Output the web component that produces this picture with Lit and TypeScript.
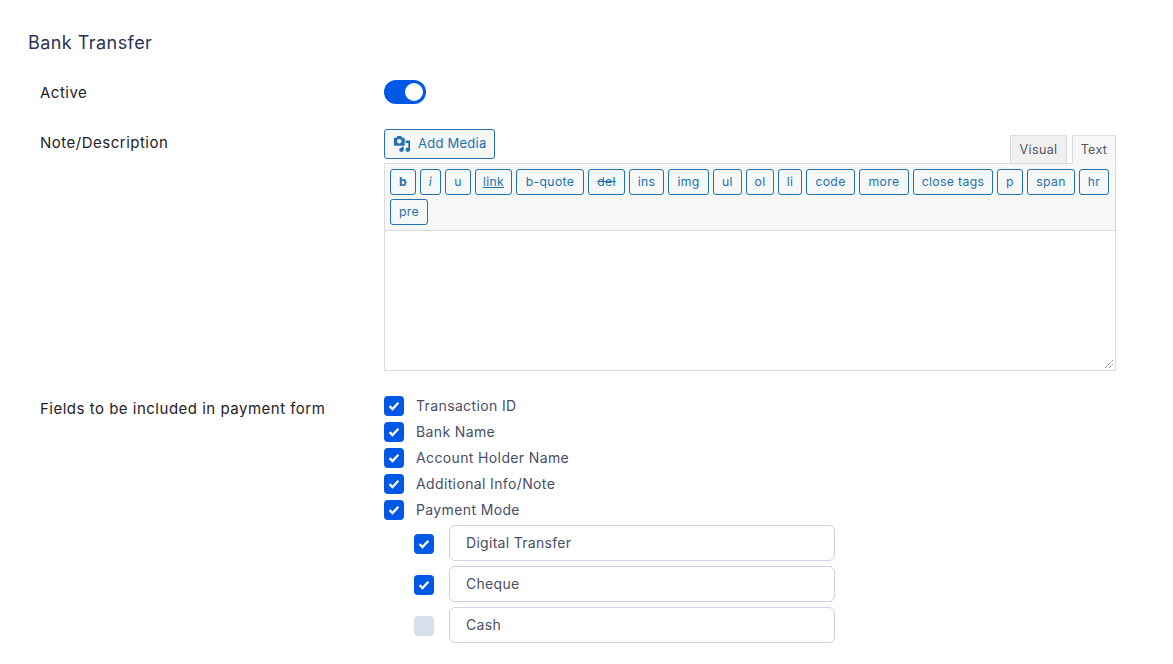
import { LitElement, html, css, svg } from "lit";
import { customElement } from "lit/decorators.js";

const QT: [string, number, string?][] = [
  ["b", 26, "b"], ["i", 21, "i"], ["u", 26], ["link", 37, "l"], ["b-quote", 68], ["del", 37, "d"],
  ["ins", 35], ["img", 41], ["ul", 29], ["ol", 28], ["li", 24], ["code", 49], ["more", 50],
  ["close tags", 80], ["p", 26], ["span", 48], ["hr", 30], ["pre", 38],
];
const FIELDS = ["Transaction ID", "Bank Name", "Account Holder Name", "Additional Info/Note", "Payment Mode"];
const MODES: [string, boolean][] = [["Digital Transfer", true], ["Cheque", true], ["Cash", false]];

const check = svg`<svg width="12" height="10" viewBox="0 0 12 10"><path d="M1.600 5.200 4.500 8 10.400 1.800" fill="none" stroke="#fff" stroke-width="2.300"/></svg>`;

@customElement("app-root")
export class AppRoot extends LitElement {
  static styles = css`
    :host { display: block; width: 1173px; height: 664px; overflow: hidden; background: #fff;
      font-family: Inter, "Noto Sans", sans-serif; box-sizing: border-box; padding: 33px 0 0 28px; }
    * { box-sizing: border-box; }
    h2 { margin: 0; font-size: 18px; line-height: 20px; font-weight: 400; color: #2a3256; letter-spacing: 0.45px; }
    .row { display: grid; grid-template-columns: 344px 732px; padding-left: 12px; }
    .label { font-size: 15px; line-height: 20px; color: #1d2327; letter-spacing: 0.5px; white-space: nowrap; }
    .active { margin-top: 27px; height: 24px; align-items: center; }
    .active .label { padding-top: 1px; }
    .toggle { width: 42px; height: 24px; border-radius: 12px; background: #0058e6; display: flex; align-items: center; justify-content: flex-end; padding-right: 3px; }
    .knob { width: 18px; height: 18px; border-radius: 50%; background: #fff; }
    .note { margin-top: 25px; }
    .note .label { padding-top: 4px; }
    .head { height: 34px; display: flex; justify-content: space-between; align-items: flex-start; }
    .media { height: 30px; width: 111px; display: flex; align-items: center; gap: 7px; padding-left: 8px; border: 1px solid #2271b1; border-radius: 3px; background: #f6f7f7; color: #2271b1; font-size: 13px; letter-spacing: 0.25px; }
    .media span { margin-top: -2px; }
    .tabs { display: flex; gap: 5px; margin-top: 6px; }
    .tab { height: 29px; display: flex; align-items: center; justify-content: center; border: 1px solid #dcdcde; font-size: 12.500px; color: #50575e; background: #f0f0f1; width: 57px; letter-spacing: 0.35px; }
    .tab.on { width: 44px; background: #f6f7f7; border-bottom-color: #f6f7f7; position: relative; }
    .toolbar { display: flex; flex-wrap: wrap; gap: 4px; height: 67px; padding: 5px 5px 0; align-content: flex-start; background: #f6f7f7; border: 1px solid #dcdcde; border-bottom: 0; }
    .qt { height: 26px; display: flex; align-items: center; justify-content: center; border: 1px solid #2271b1; border-radius: 3px; color: #2271b1; font-size: 12.200px; letter-spacing: 0.35px; background: #f6f7f7; white-space: nowrap; padding-bottom: 2px; }
    .qt.b { font-weight: 700; }
    .qt.i { font-style: italic; }
    .qt.l { text-decoration: underline; }
    .qt.d { text-decoration: line-through; }
    .area { height: 141px; border: 1px solid #dcdcde; background: #fff; position: relative; }
    .grip { position: absolute; right: 1px; bottom: 1px; }
    .fields { margin-top: 25px; }
    .fields .label { padding-top: 3px; }
    .list { display: flex; flex-direction: column; gap: 6px; }
    .item { display: flex; align-items: center; gap: 12px; height: 20px; font-size: 14px; line-height: 18px; letter-spacing: 0.37px; color: #484d68; }
    .item-text { display: block; margin-top: -1px; }
    .box { width: 20px; height: 20px; border-radius: 4px; background: #0058e6; display: flex; align-items: center; justify-content: center; flex: none; }
    .box.off { background: #d8dfeb; }
    .modes { display: flex; flex-direction: column; gap: 5px; padding: 0 0 0 30px; margin-top: -1px; }
    .mode { display: flex; align-items: center; gap: 15px; }
    .mode .box { margin-top: 2px; }
    .input { width: 386px; height: 36px; border: 1px solid #cdd3e2; border-radius: 6px; padding: 0 0 2px 16px; display: flex; align-items: center; font-size: 14px; letter-spacing: 0.3px; color: #484d68; background: #fff; }
  `;

  render() {
    return html`
      <h2>Bank Transfer</h2>
      <div class="row active">
        <div class="label">Active</div>
        <div class="toggle"><div class="knob"></div></div>
      </div>
      <div class="row note">
        <div class="label">Note/Description</div>
        <div>
          <div class="head">
            <div class="media">
              <svg width="18" height="18" viewBox="0 0 20 20" fill="#2271b1">
                <path fill-rule="evenodd" d="M13 11V4c0-.55-.45-1-1-1h-1.670L9 1H5L3.670 3H2c-.55 0-1 .45-1 1v7c0 .55.45 1 1 1h10c.55 0 1-.45 1-1zM7 4.500c1.380 0 2.500 1.120 2.500 2.500S8.380 9.500 7 9.500 4.500 8.380 4.500 7 5.620 4.500 7 4.500z"/>
                <path d="M14 6h5v10.500c0 1.380-1.120 2.500-2.500 2.500S14 17.880 14 16.500s1.120-2.500 2.500-2.500c.17 0 .34.020.5.050V9h-3V6zm-4 8.050V13h2v3.500c0 1.380-1.120 2.500-2.500 2.500S7 17.880 7 16.500 8.120 14 9.500 14c.17 0 .34.020.5.050z"/>
              </svg>
              <span>Add Media</span>
            </div>
            <div class="tabs"><div class="tab">Visual</div><div class="tab on">Text</div></div>
          </div>
          <div class="toolbar">
            ${QT.map(([t, w, c]) => html`<div class="qt ${c ?? ""}" style="width:${w}px">${t}</div>`)}
          </div>
          <div class="area">
            <svg class="grip" width="10" height="10" viewBox="0 0 10 10"><path d="M1 9 9 1M5 9 9 5" stroke="#50575e" stroke-width="1" stroke-dasharray="1 1"/></svg>
          </div>
        </div>
      </div>
      <div class="row fields">
        <div class="label">Fields to be included in payment form</div>
        <div class="list">
          ${FIELDS.map((f) => html`<div class="item"><span class="box">${check}</span><span class="item-text">${f}</span></div>`)}
          <div class="modes">
            ${MODES.map(([m, on]) => html`<div class="mode"><span class="box ${on ? "" : "off"}">${on ? check : ""}</span><div class="input">${m}</div></div>`)}
          </div>
        </div>
      </div>
    `;
  }
}
